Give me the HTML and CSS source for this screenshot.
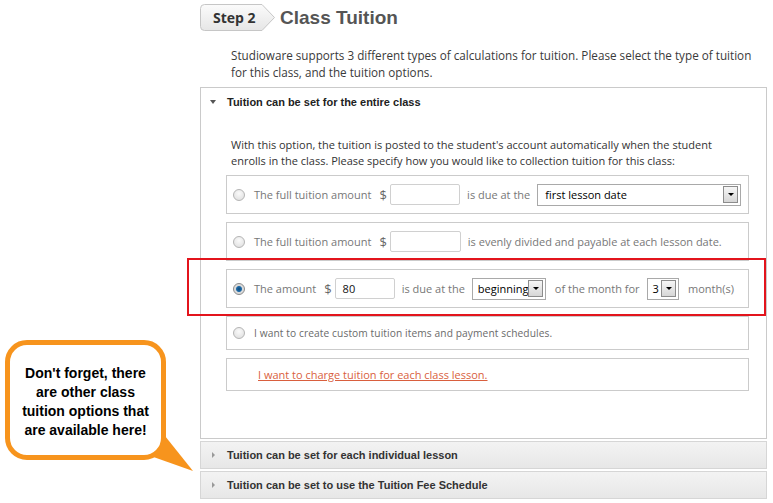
FILE: index.html
```html
<!DOCTYPE html>
<html>
<head>
<meta charset="utf-8">
<link rel="stylesheet" href="styles.css">
</head>
<body>
<div class="callout">
  <svg class="callout-tail" width="200" height="140" viewBox="0 0 200 140"><polygon points="145,114 165,96 193,131" fill="#f7941d"/></svg>
  <div class="callout-box">Don't forget, there are other class tuition options that are available here!</div>
</div>
<div class="page">
  <div class="head">
    <div class="badge">
      <svg class="badge-bg" width="76" height="28" viewBox="0 0 76 28">
        <defs><linearGradient id="bg" x1="0" y1="0" x2="0" y2="1"><stop offset="0" stop-color="#fbfbfb"/><stop offset="1" stop-color="#e6e6e6"/></linearGradient></defs>
        <path d="M4.5 0.5 H62 L74.5 13.5 L62 26.5 H4.5 Q0.5 26.5 0.5 22.5 V4.5 Q0.5 0.5 4.5 0.5 Z" fill="url(#bg)" stroke="#c6c6c6"/>
      </svg>
      <span class="badge-text">Step 2</span>
    </div>
    <h1 class="title">Class Tuition</h1>
  </div>
  <p class="intro">Studioware supports 3 different types of calculations for tuition. Please select the type of tuition for this class, and the tuition options.</p>

  <div class="panel open">
    <div class="panel-head"><span class="tri-down"></span>Tuition can be set for the entire class</div>
    <div class="panel-body">
      <p class="desc">With this option, the tuition is posted to the student's account automatically when the student enrolls in the class. Please specify how you would like to collection tuition for this class:</p>

      <div class="opt">
        <span class="radio"></span>
        <span class="lbl">The full tuition amount</span>
        <span class="cur">$</span>
        <span class="inp w71"></span>
        <span class="lbl">is due at the</span>
        <span class="sel wide"><span class="sel-val">first lesson date</span><span class="sel-btn"></span></span>
      </div>

      <div class="opt">
        <span class="radio"></span>
        <span class="lbl">The full tuition amount</span>
        <span class="cur">$</span>
        <span class="inp w71"></span>
        <span class="lbl">is evenly divided and payable at each lesson date.</span>
      </div>

      <div class="opt hl">
        <span class="radio on"></span>
        <span class="lbl">The amount</span>
        <span class="cur">$</span>
        <span class="inp w70"><span class="inp-val">80</span></span>
        <span class="lbl">is due at the</span>
        <span class="sel w74"><span class="sel-val">beginning</span><span class="sel-btn"></span></span>
        <span class="lbl">of the month for</span>
        <span class="sel w36"><span class="sel-val">3</span><span class="sel-btn"></span></span>
        <span class="lbl">month(s)</span>
      </div>

      <div class="opt short">
        <span class="radio"></span>
        <span class="lbl small">I want to create custom tuition items and payment schedules.</span>
      </div>

      <div class="opt short link-row">
        <a class="link" href="#">I want to charge tuition for each class lesson.</a>
      </div>
    </div>
  </div>

  <div class="panel closed">
    <div class="panel-head"><span class="tri-right"></span>Tuition can be set for each individual lesson</div>
  </div>
  <div class="panel closed">
    <div class="panel-head"><span class="tri-right"></span>Tuition can be set to use the Tuition Fee Schedule</div>
  </div>
</div>
</body>
</html>
```
FILE: styles.css
```css
* { box-sizing: border-box; }
body {
  margin: 0;
  background: #fff;
  font-family: "Open Sans", "DejaVu Sans", sans-serif;
  font-size: 11px;
  color: #444;
}
.page {
  margin-left: 200px;
  width: 567px;
  padding-top: 4px;
}
.head {
  display: flex;
  align-items: center;
  height: 27px;
}
.badge {
  position: relative;
  width: 76px;
  height: 27px;
  flex: none;
}
.badge-bg { position: absolute; left: 0; top: 0; }
.badge-text {
  position: relative;
  display: block;
  padding-left: 13px;
  line-height: 27px;
  font-family: "Open Sans", sans-serif;
  font-weight: 700;
  font-size: 14px;
  color: #333;
}
.title {
  margin: 0 0 0 4px;
  font-family: "Liberation Sans", Arial, sans-serif;
  font-weight: 700;
  font-size: 19px;
  color: #555;
  line-height: 27px;
}
.intro {
  margin: 16px 0 6px;
  padding: 0 6px 0 31px;
  line-height: 17px;
  font-size: 11.7px;
  color: #3a3a3a;
}
.panel {
  border: 1px solid #cacaca;
}
.panel-head {
  display: flex;
  align-items: center;
  height: 27px;
  padding-left: 8px;
  font-family: "Liberation Sans", Arial, sans-serif;
  font-weight: 700;
  font-size: 11px;
  color: #222;
}
.tri-down {
  width: 0; height: 0;
  border-left: 3px solid transparent;
  border-right: 3px solid transparent;
  border-top: 4px solid #555;
  margin-right: 11px;
  margin-left: 1px;
}
.tri-right {
  width: 0; height: 0;
  border-top: 3px solid transparent;
  border-bottom: 3px solid transparent;
  border-left: 3px solid #999;
  margin-left: 3px;
  margin-right: 12px;
}
.panel-body {
  padding: 22px 17px 39px 25px;
}
.desc {
  margin: 0 0 6px;
  padding-left: 5px;
  line-height: 16px;
  color: #333;
}
.opt {
  position: relative;
  display: flex;
  align-items: center;
  height: 39px;
  padding: 0 7px 0 6px;
  border: 1px solid #cbcbcb;
  margin-bottom: 8px;
  color: #777;
  white-space: nowrap;
}
.opt.short { height: 34px; }
.opt.link-row { height: 33px; padding-left: 31px; }
.opt.hl::after {
  content: "";
  position: absolute;
  left: -40px;
  right: -18px;
  top: -12px;
  bottom: -9px;
  border: 2px solid #e3141c;
  pointer-events: none;
}
.radio {
  width: 12px; height: 12px;
  border-radius: 50%;
  border: 1px solid #b4b4b4;
  background: radial-gradient(circle at 50% 35%, #fafafa, #dcdcdc);
  margin-right: 9px;
  flex: none;
  position: relative;
}
.radio.on {
  border-color: #8a8a8a;
  background: radial-gradient(circle, #0f4a7a 0, #1d6aa8 2.5px, #d8d8d8 3.5px, #e6e6e6 100%);
}
.lbl { margin-right: 7px; }
.lbl.small { font-size: 10.2px; letter-spacing: 0.1px; color: #6a6a6a; }
.cur { margin-right: 3px; margin-left: 1px; color: #666; font-size: 13px; }
.inp {
  display: inline-flex;
  align-items: center;
  height: 21px;
  border: 1px solid #d0d0d0;
  border-radius: 2px;
  background: #fff;
  margin-right: 7px;
  padding-left: 7px;
  color: #111;
}
.w71 { width: 71px; }
.w70 { width: 70px; }
.sel {
  display: inline-flex;
  align-items: center;
  justify-content: space-between;
  height: 22px;
  border: 1px solid #a9a9a9;
  background: #fff;
  margin-right: 9px;
  padding: 0 2px 0 7px;
  color: #000;
}
.sel.wide { width: 206px; margin-right: 0; }
.w74 { width: 74px; padding-left: 5px; }
.w36 { width: 37px; padding-left: 5px; }
.sel-btn {
  position: relative;
  width: 15px; height: 17px;
  border: 1px solid #8c8c8c;
  background: linear-gradient(#f6f6f6, #d6d6d6);
  flex: none;
}
.sel-btn::after {
  content: "";
  position: absolute;
  left: 4px; top: 6px;
  border-left: 3px solid transparent;
  border-right: 3px solid transparent;
  border-top: 3px solid #000;
}
.link {
  color: #d95f3e;
  text-decoration: underline;
}
.panel.closed {
  margin-top: 2px;
  border-color: #d6d6d6;
  background: linear-gradient(#f3f3f3, #e7e7e7);
}
.panel.closed .panel-head { color: #333; height: 26px; }
.callout {
  position: absolute;
  left: 5px;
  top: 340px;
  width: 200px;
  height: 140px;
}
.callout-tail { position: absolute; left: -5px; top: 0; }
.callout-box {
  position: relative;
  width: 161px;
  height: 120px;
  border: 5px solid #f7941d;
  border-radius: 22px;
  background: #fff;
  display: flex;
  align-items: center;
  justify-content: center;
  text-align: center;
  padding: 3px 10px 0;
  font-family: "Liberation Sans", Arial, sans-serif;
  font-weight: 700;
  font-size: 14px;
  line-height: 19px;
  color: #000;
}
```
